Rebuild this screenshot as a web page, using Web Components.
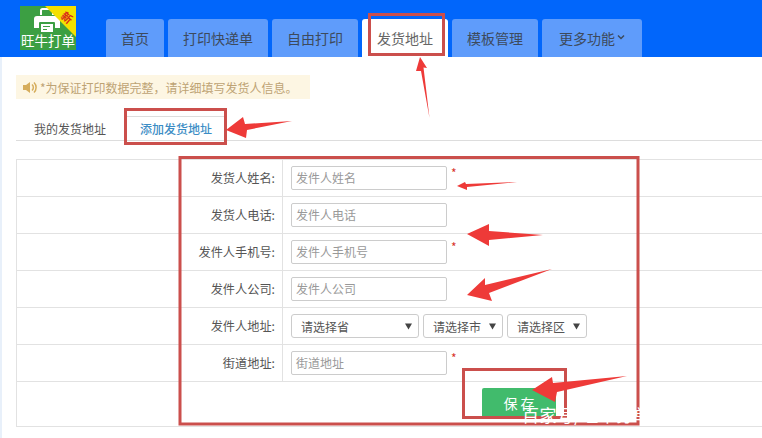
<!DOCTYPE html>
<html lang="zh">
<head>
<meta charset="utf-8">
<title>发货地址</title>
<style>
  html, body { margin: 0; height: 100%; overflow: hidden; background: #fff; }
  body { font-family: "Noto Sans CJK SC", "Liberation Sans", sans-serif; color: #555; position: relative; }
</style>
</head>
<body>
<app-header>
  <nav-tab w="58">首页</nav-tab>
  <nav-tab w="100">打印快递单</nav-tab>
  <nav-tab w="86">自由打印</nav-tab>
  <nav-tab w="86" active>发货地址</nav-tab>
  <nav-tab w="86">模板管理</nav-tab>
  <nav-tab w="100" more>更多功能</nav-tab>
</app-header>
<page-main>
  <notice-bar>*为保证打印数据完整，请详细填写发货人信息。</notice-bar>
  <sub-tabs></sub-tabs>
  <address-form>
    <form-row label="发货人姓名:"><text-field star>发件人姓名</text-field></form-row>
    <form-row label="发货人电话:"><text-field>发件人电话</text-field></form-row>
    <form-row label="发件人手机号:"><text-field star>发件人手机号</text-field></form-row>
    <form-row label="发件人公司:"><text-field>发件人公司</text-field></form-row>
    <form-row label="发件人地址:">
      <select-box w="128">请选择省</select-box>
      <select-box w="80">请选择市</select-box>
      <select-box w="80">请选择区</select-box>
    </form-row>
    <form-row label="街道地址:"><text-field star>街道地址</text-field></form-row>
    <save-row>保 存</save-row>
  </address-form>
</page-main>
<mark-up></mark-up>

<script>
// top blue bar with logo and tabs
customElements.define('app-header', class extends HTMLElement {
  constructor(){
    super();
    this.attachShadow({mode: 'open'}).innerHTML = `
    <style>
      :host { display: flex; height: 57px; background: #0166fb; box-sizing: border-box; padding-left: 20px; align-items: flex-end; }
      .logo { position: relative; width: 56px; height: 44px; margin-bottom: 7px; margin-right: 30px; background: #3c9f43; color: #fff; display: flex; flex-direction: column; align-items: center; justify-content: flex-end; }
      .logo svg.printer { position: absolute; left: 13px; top: 2px; }
      .logo .txt { font-size: 13.500px; line-height: 18px; white-space: nowrap; position: relative; top: -1px; }
      .corner { position: absolute; right: 0; top: 0; width: 0; height: 0; border-style: solid; border-width: 0 31px 31px 0; border-color: transparent #f4e000 transparent transparent; }
      .xin { position: absolute; right: 3px; top: 4px; font-size: 11px; line-height: 14px; font-weight: 700; color: #d8261c; transform: rotate(40deg); }
      .tabs { display: flex; gap: 4px; align-items: flex-end; }
    </style>
    <div class="logo">
      <svg class="printer" width="28" height="26" viewBox="0 0 28 26">
        <path d="M8 7V2.500A1.500 1.500 0 0 1 9.500 1h9A1.500 1.500 0 0 1 20 2.500V7" fill="none" stroke="#fff" stroke-width="2"/>
        <path d="M4 8h20a3 3 0 0 1 3 3v9H1v-9a3 3 0 0 1 3-3z" fill="#fff"/>
        <rect x="6" y="14" width="16" height="12" rx="1" fill="#3c9f43"/>
        <rect x="8" y="16" width="12" height="8" fill="#fff"/>
        <rect x="10" y="18" width="7" height="1" fill="#3c9f43"/>
        <rect x="10" y="21" width="4" height="1" fill="#3c9f43"/>
      </svg>
      <div class="corner"></div>
      <span class="xin">新</span>
      <span class="txt">旺牛打单</span>
    </div>
    <div class="tabs"><slot></slot></div>`;
  }
});

customElements.define('nav-tab', class extends HTMLElement {
  constructor(){
    super();
    const more = this.hasAttribute('more');
    this.attachShadow({mode: 'open'}).innerHTML = `
    <style>
      :host { display: flex; align-items: center; justify-content: center; height: 38px; width: ${this.getAttribute('w')}px; background: #5f9cfb; color: #3d4a5c; font-size: 14px; border-radius: 3px 3px 0 0; white-space: nowrap; box-sizing: border-box; }
      :host([active]) { background: #fff; color: #666; }
      svg { margin-left: 2px; margin-top: -2px; }
    </style>
    <slot></slot>
    ${more ? '<svg width="8" height="6" viewBox="0 0 8 6"><path d="M1 1.500l3 3 3-3" fill="none" stroke="#3d4a5c" stroke-width="1.500"/></svg>' : ''}`;
  }
});

customElements.define('page-main', class extends HTMLElement {
  constructor(){
    super();
    this.attachShadow({mode: 'open'}).innerHTML = `
    <style>
      :host { display: block; padding: 18px 0 0 14px; border-left: 2px solid #e8f0fa; height: 363px; }
    </style>
    <slot></slot>`;
  }
});

customElements.define('notice-bar', class extends HTMLElement {
  constructor(){
    super();
    this.attachShadow({mode: 'open'}).innerHTML = `
    <style>
      :host { display: flex; align-items: center; width: 294px; height: 24px; box-sizing: border-box; padding-left: 6px; background: #fdf6e3; color: #bda374; font-size: 12px; white-space: nowrap; }
      svg { margin-right: 3px; flex: none; }
    </style>
    <svg width="15" height="13" viewBox="0 0 15 13">
      <path d="M1 4h3l4-3v11L4 9H1z" fill="#d6ad5c"/>
      <path d="M10 3.500a4 4 0 0 1 0 6M12 1.500a7 7 0 0 1 0 10" fill="none" stroke="#d6ad5c" stroke-width="1.500"/>
    </svg>
    <slot></slot>`;
  }
});

customElements.define('sub-tabs', class extends HTMLElement {
  constructor(){
    super();
    this.attachShadow({mode: 'open'}).innerHTML = `
    <style>
      :host { display: flex; align-items: flex-end; height: 42px; margin-bottom: 18px; border-bottom: 1px solid #ddd; font-size: 12px; box-sizing: border-box; }
      div { height: 23px; line-height: 23px; white-space: nowrap; }
      .off { width: 108px; padding-right: 1px; text-align: center; color: #555; }
      .on { width: 100px; text-align: center; color: #3c8dc5; border: 1px solid #ddd; border-bottom: 0; font-weight: 500; }
    </style>
    <div class="off">我的发货地址</div>
    <div class="on">添加发货地址</div>`;
  }
});

customElements.define('address-form', class extends HTMLElement {
  constructor(){
    super();
    this.attachShadow({mode: 'open'}).innerHTML = `
    <style>
      :host { display: block; border-top: 1px solid #e2e2e2; border-left: 1px solid #e2e2e2; }
    </style>
    <slot></slot>`;
  }
});

customElements.define('form-row', class extends HTMLElement {
  constructor(){
    super();
    this.attachShadow({mode: 'open'}).innerHTML = `
    <style>
      :host { display: grid; grid-template-columns: 266px 1fr; height: 37px; box-sizing: border-box; border-bottom: 1px solid #e2e2e2; font-size: 12.200px; color: #555; }
      .label { display: flex; align-items: center; justify-content: flex-end; padding-right: 7px; border-right: 1px solid #e2e2e2; white-space: nowrap; }
      .ctl { display: flex; align-items: center; gap: 4px; padding-left: 8px; }
    </style>
    <div class="label">${this.getAttribute('label')}</div>
    <div class="ctl"><slot></slot></div>`;
  }
});

customElements.define('text-field', class extends HTMLElement {
  constructor(){
    super();
    this.attachShadow({mode: 'open'}).innerHTML = `
    <style>
      :host { display: flex; align-items: flex-start; }
      .box { width: 156px; height: 24px; box-sizing: border-box; border: 1px solid #ccc; border-radius: 2px; padding-left: 4px; line-height: 21px; font-size: 12px; color: #999; white-space: nowrap; }
      .star { margin-left: 4px; color: #d8362c; font-size: 12px; line-height: 14px; }
    </style>
    <div class="box"><slot></slot></div>
    ${this.hasAttribute('star') ? '<span class="star">*</span>' : ''}`;
  }
});

customElements.define('select-box', class extends HTMLElement {
  constructor(){
    super();
    this.attachShadow({mode: 'open'}).innerHTML = `
    <style>
      :host { display: flex; align-items: center; justify-content: space-between; width: ${this.getAttribute('w')}px; height: 24px; box-sizing: border-box; border: 1px solid #ccc; border-radius: 3px; padding: 0 6px 0 9px; font-size: 12px; color: #555; white-space: nowrap; }
      svg { flex: none; }
    </style>
    <slot></slot>
    <svg width="7" height="7" viewBox="0 0 7 7"><path d="M0 .5h7L3.500 6.500z" fill="#444"/></svg>`;
  }
});

customElements.define('save-row', class extends HTMLElement {
  constructor(){
    super();
    this.attachShadow({mode: 'open'}).innerHTML = `
    <style>
      :host { display: flex; height: 45px; box-sizing: border-box; padding: 6px 0 0 465px; border-bottom: 1px solid #e2e2e2; }
      .btn { width: 74px; height: 30px; line-height: 30px; text-align: center; background: #41bb6c; color: #fff; font-size: 14px; border-radius: 2px; white-space: nowrap; }
    </style>
    <div class="btn"><slot></slot></div>`;
  }
});

// red boxes, arrows and the watermark drawn over the screenshot
customElements.define('mark-up', class extends HTMLElement {
  constructor(){
    super();
    this.attachShadow({mode: 'open'}).innerHTML = `
    <style>
      :host { position: absolute; left: 0; top: 0; width: 762px; height: 438px; pointer-events: none; }
      svg { position: absolute; left: 0; top: 0; }
      .wm { position: absolute; left: 522px; top: 403px; font-size: 17px; line-height: 24px; letter-spacing: .4px; color: #fff; white-space: nowrap; }
    </style>
    <svg width="762" height="438" viewBox="0 0 762 438">
      <g fill="none" stroke="#cb4f4c" stroke-width="3">
        <rect x="369.500" y="14.500" width="74" height="40"/>
        <rect x="125.500" y="109.500" width="100" height="34"/>
        <rect x="180" y="157.500" width="458" height="266.500"/>
        <rect x="463.500" y="369.500" width="102" height="48"/>
      </g>
      <g fill="#ee3a38">
        <polygon points="420,57 427,68 423.500,67.500 429.500,118 421,71 416,71"/>
        <polygon points="226,130 243,117 245,124 292,121 247,130 246,138"/>
        <polygon points="457,186 465,182 466,184 517,182 467,187 467,190"/>
        <polygon points="467,234 489,224 489,231 543,235 489,240 489,246"/>
        <polygon points="467,295 485,278 485,285 552,269 489,293 492,301"/>
        <polygon points="532,390 552,377 553,383 627,376 557,392 555,402"/>
      </g>
    </svg>
    <div class="wm">百家号/旺牛打单</div>`;
  }
});
</script>
</body>
</html>
